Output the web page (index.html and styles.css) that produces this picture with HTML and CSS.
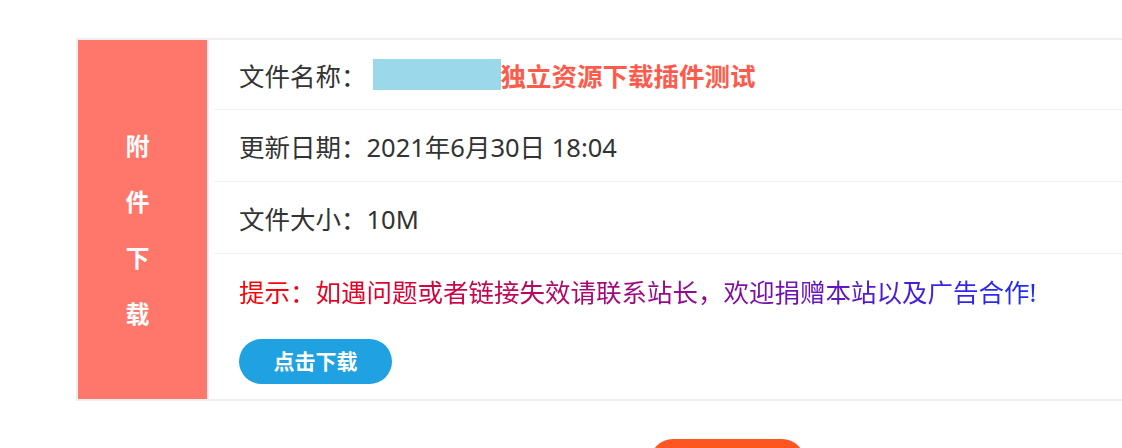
FILE: index.html
```html
<!DOCTYPE html>
<html lang="zh-CN">
  <head>
    <meta charset="UTF-8" />
    <meta name="viewport" content="width=device-width, initial-scale=1.0" />
    <title>附件下载</title>
    <link rel="stylesheet" href="styles.css">
  </head>
  <body>
    <div class="down-box">
      <div class="down-title">
        <span>附</span>
        <span>件</span>
        <span>下</span>
        <span>载</span>
      </div>
      <ul class="down-info">
        <li>
          文件名称：<span class="mask"></span><strong class="file-name">独立资源下载插件测试</strong>
        </li>
        <li>更新日期：2021年6月30日 18:04</li>
        <li>文件大小：10M</li>
        <li class="down-tip">
          <p class="tip">提示：如遇问题或者链接失效请联系站长，欢迎捐赠本站以及广告合作!</p>
          <a class="down-btn" href="#">点击下载</a>
        </li>
      </ul>
    </div>

    <div class="back-wrap">
      <a class="back-btn" href="#" aria-label="返回"></a>
    </div>
  </body>
</html>
```

FILE: styles.css
```css
/* General reset */
* {
  margin: 0;
  padding: 0;
  box-sizing: border-box;
}

html,
body {
  overflow: hidden;
}

body {
  background: #fff;
  color: #333;
  font-family: "Noto Sans", "Noto Sans CJK SC", sans-serif;
  padding: 38px 0 0 76px;
}

/* Download box */
.down-box {
  display: flex;
  width: 1302px;
  border: 2px solid #eee;
}

.down-title {
  width: 131px;
  flex-shrink: 0;
  background: #ff766a;
  border-right: 2px solid #eee;
  display: flex;
  flex-direction: column;
  justify-content: center;
  align-items: center;
  padding: 21px 10px 0 0;
  color: #fff;
  font-weight: bold;
  font-size: 24px;
  line-height: 56px;
}

.down-info {
  flex: 1;
  list-style: none;
  padding-left: 5px;
}

.down-info li {
  display: flex;
  align-items: center;
  height: 72px;
  padding-left: 25px;
  border-bottom: 1px solid #f1f1f1;
  font-size: 25.5px;
}

.down-info li:first-child {
  height: 70px;
}

.mask {
  display: inline-block;
  width: 128px;
  height: 31px;
  margin-left: 6px;
  background: #9ad8ea;
}

.file-name {
  color: #fd5b4c;
  font-size: 25.5px;
}

/* Tip and button row */
.down-info li.down-tip {
  display: block;
  height: auto;
  padding-top: 20px;
  padding-bottom: 15px;
  border-bottom: none;
}

.tip {
  display: inline-block;
  line-height: 36px;
  background: linear-gradient(to right, #ff0000, #8a0a9a 60%, #1a2cff);
  -webkit-background-clip: text;
  background-clip: text;
  color: transparent;
}

.down-btn {
  display: block;
  width: 153px;
  height: 45px;
  margin-top: 29px;
  border-radius: 23px;
  background: #1fa1e2;
  color: #fff;
  font-size: 21px;
  font-weight: bold;
  line-height: 45px;
  text-align: center;
  text-decoration: none;
}

/* Back button below */
.back-wrap {
  width: 1302px;
  margin-top: 38px;
  text-align: center;
}

.back-btn {
  display: inline-block;
  width: 155px;
  height: 46px;
  border-radius: 23px;
  background: #fe5621;
}
```
